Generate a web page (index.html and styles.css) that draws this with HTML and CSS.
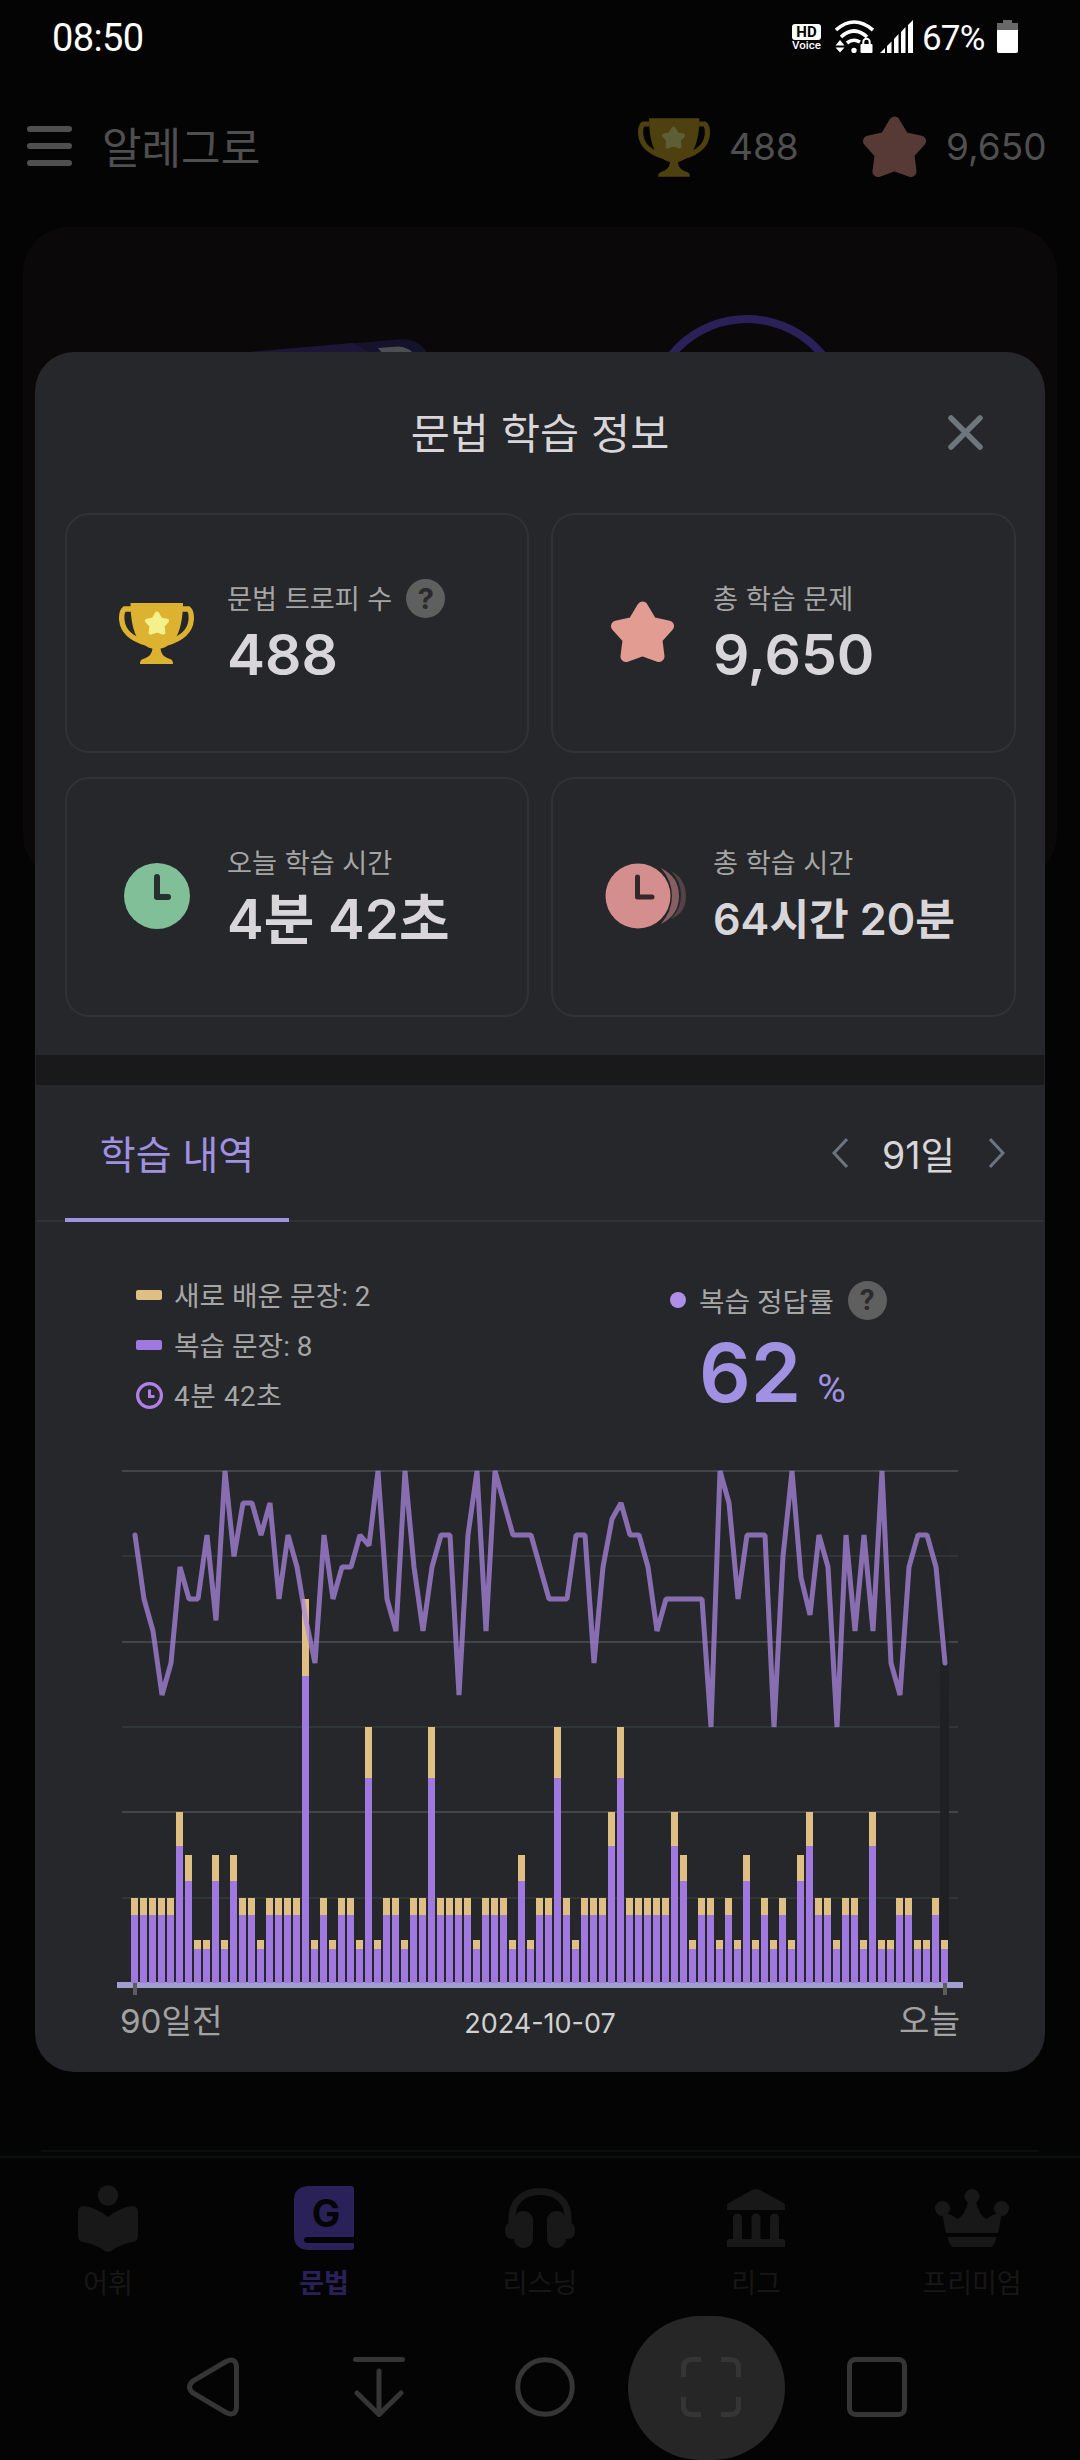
FILE: index.html
```html
<!DOCTYPE html>
<html lang="ko">
<head>
  <meta charset="UTF-8">
  <title>문법 학습 정보</title>
  <link rel="stylesheet" href="styles.css">
</head>
<body>

<!-- shared icons -->
<svg class="defs" width="0" height="0">
  <symbol id="star" viewBox="0 0 63 61">
    <path d="M31.5 6L40.6 21.3L57.5 25L45.8 38L48 55.5L31.5 49.5L15 55.5L17.2 38L5.5 25L22.4 21.3Z" fill="currentColor" stroke="currentColor" stroke-width="11" stroke-linejoin="round"/>
  </symbol>
  <symbol id="trophy" viewBox="0 0 75 61">
    <path d="M11.5 0H64C64 15 61 29 56 36C50 42 46 46 37.5 46C29 46 25 42 19 36C14 29 11.5 15 11.5 0Z" fill="currentColor"/>
    <path d="M12 6H5.5C3 8 2.5 13 2.8 17C4 30 14 36 27 40M63 6H69.5C72 8 72.5 13 72.2 17C71 30 61 36 48 40" fill="none" stroke="currentColor" stroke-width="5.4"/>
    <path d="M33.5 44C33.5 51 30 54 24 56C21.500 57 21 58.500 21 61H54C54 58.500 53.500 57 51 56C45 54 41.500 51 41.500 44Z" fill="currentColor"/>
  </symbol>
</svg>

<div class="screen">
  <div class="status-bar">
    <span class="clock">08:50</span>
    <div class="status-icons">
      <div class="hd"><b>HD</b><span>Voice</span></div>
      <svg class="wifi" width="39" height="33" viewBox="0 0 39 33">
        <g fill="none" stroke="#fff" stroke-width="3.6">
          <path d="M1 10Q19 -6 38 10"/>
          <path d="M6 17Q19 5 32 17"/>
          <path d="M12 23Q18 18 25 22"/>
        </g>
        <circle cx="19" cy="30.500" r="2.700" fill="#fff"/>
        <path d="M0.500 25.500L5 20L9.500 25.500ZM0.500 27.500L5 32.500L9.500 27.500Z" fill="#fff"/>
        <rect x="25.500" y="24" width="12" height="9" rx="1" fill="#fff"/>
        <path d="M28.300 25V22a3.200 3.200 0 0 1 6.400 0V25" fill="none" stroke="#fff" stroke-width="2"/>
      </svg>
      <svg class="signal" width="33" height="33" viewBox="0 0 33 33" fill="#fff">
        <path d="M0 33L5 28V33ZM7 26L11.500 21.500V33H7ZM14 19L18.500 14V33H14ZM21 12L25.500 7V33H21ZM28 5L33 0V33H28Z"/>
      </svg>
      <span class="percent">67%</span>
      <svg width="21" height="33" viewBox="0 0 21 33">
        <path d="M6 0H15V3H21V10H0V3H6Z" fill="#686868"/>
        <path d="M0 10H21V31Q21 33 19 33H2Q0 33 0 31Z" fill="#fff"/>
      </svg>
    </div>
  </div>

  <div class="app-header">
    <div class="menu"><i></i><i></i><i></i></div>
    <span class="user">알레그로</span>
    <div class="score score-trophy">
      <div class="trophy dim"><svg width="72" height="59"><use href="#trophy"/></svg><svg class="trophy-star" width="23" height="23"><use href="#star"/></svg></div>
      <span>488</span>
    </div>
    <div class="score score-star">
      <svg class="dim-star" width="63" height="61"><use href="#star"/></svg>
      <span>9,650</span>
    </div>
  </div>

  <div class="hero">
    <svg width="1034" height="130" viewBox="23 227 1034 130">
      <path d="M238 353L392 340Q418 336 427 353Z" fill="#15122b"/>
      <path d="M238 353L353 343L371 353Z" fill="#1e1636"/>
      <path d="M378 348L398 346.500Q408 347 413 353H382Z" fill="#4e4e52"/>
      <circle cx="747" cy="416" r="97" fill="none" stroke="#2b2159" stroke-width="8"/>
    </svg>
  </div>

  <div class="bottom">
    <div class="content-line"></div>
    <div class="tab-bar">
      <div class="tab">
        <svg width="60" height="67" viewBox="0 0 60 67" fill="#181818">
          <circle cx="30" cy="10.500" r="10.200"/>
          <path d="M30 32Q17 22 6 21Q0 21 0 27V51Q0 56 5 57Q17 59 26 65.500Q30 68 34 65.500Q43 59 55 57Q60 56 60 51V27Q60 21 54 21Q43 22 30 32Z"/>
        </svg>
        <span>어휘</span>
      </div>
      <div class="tab active">
        <svg width="60" height="64" viewBox="0 0 60 64">
          <path d="M14 0H57Q60 0 60 3V51H14Q10 51 10 54T14 57H60V61Q60 64 57 64H14Q0 63 0 50V14Q0 1 14 0Z" fill="#2b2159"/>
          <text class="book-letter" x="32" y="41" text-anchor="middle">G</text>
        </svg>
        <span>문법</span>
      </div>
      <div class="tab">
        <svg width="70" height="60" viewBox="0 0 70 60" fill="#181818">
          <path d="M7 36V30C7 14 18 3.500 35 3.500S63 14 63 30V36" fill="none" stroke="#181818" stroke-width="7"/>
          <rect x="9" y="23" width="19" height="37" rx="9"/>
          <rect x="42" y="23" width="19" height="37" rx="9"/>
          <rect x="0" y="34" width="14" height="17" rx="7"/>
          <rect x="56" y="34" width="14" height="17" rx="7"/>
        </svg>
        <span>리스닝</span>
      </div>
      <div class="tab">
        <svg width="58" height="58" viewBox="0 0 58 58" fill="#181818">
          <path d="M0 20V15L24 1.500Q29 -1 34 1.500L58 15V20Q58 21 57 21H1Q0 21 0 20Z"/>
          <path d="M6 51V29a4.500 4.500 0 0 1 9 0V50H24.500V29a4.500 4.500 0 0 1 9 0V50H43V29a4.500 4.500 0 0 1 9 0V50H56Q58 50 58 52V58H0V52Q0 50 2 50H6Z"/>
        </svg>
        <span>리그</span>
      </div>
      <div class="tab">
        <svg width="74" height="58" viewBox="0 0 74 58" fill="#181818">
          <circle cx="7.500" cy="19.500" r="7.500"/><circle cx="37" cy="7.500" r="7.500"/><circle cx="66.500" cy="19.500" r="7.500"/>
          <path d="M7 24Q15 24 23 30Q30 26 33 13H41Q44 26 51 30Q59 24 67 24L63 44H11ZM12.500 48H61.500Q60 56 56 58H18Q14 56 12.500 48Z"/>
        </svg>
        <span>프리미엄</span>
      </div>
    </div>
    <div class="system-bar">
      <svg width="52" height="60" viewBox="0 0 52 60"><path d="M6 24L39 4.500Q49 0 49.500 10V50Q49 60 39 55.500L6 36Q-1 30 6 24Z"/></svg>
      <svg class="round" width="52" height="60" viewBox="0 0 52 60"><path d="M2.500 2.500H49.500M26 14V57M4 36L26 57.500L48 36"/></svg>
      <svg width="60" height="60" viewBox="0 0 60 60"><circle cx="30" cy="30" r="27.300"/></svg>
      <div class="capture">
        <svg width="60" height="60" viewBox="0 0 60 60"><path d="M2.500 20V11Q2.500 2.500 11 2.500H20M40 2.500H49Q57.500 2.500 57.500 11V20M57.500 40V49Q57.500 57.500 49 57.500H40M20 57.500H11Q2.500 57.500 2.500 49V40"/></svg>
      </div>
      <svg width="60" height="60" viewBox="0 0 60 60"><rect x="2.500" y="2.500" width="55" height="55" rx="6"/></svg>
    </div>
  </div>

  <div class="modal">
    <div class="modal-header">
      <h1>문법 학습 정보</h1>
      <svg width="35" height="35" viewBox="0 0 35 35"><path d="M3 3L32 32M32 3L3 32" stroke="#6e757b" stroke-width="5.500" stroke-linecap="round"/></svg>
    </div>

    <div class="stats">
      <div class="stat">
        <div class="trophy"><svg width="75" height="61"><use href="#trophy"/></svg><svg class="trophy-star" width="24" height="24"><use href="#star"/></svg></div>
        <div class="stat-text">
          <p><span>문법 트로피 수</span><i class="help">?</i></p>
          <strong>488</strong>
        </div>
      </div>
      <div class="stat">
        <div class="stat-icon pink-star"><svg width="63" height="61"><use href="#star"/></svg></div>
        <div class="stat-text">
          <p><span>총 학습 문제</span></p>
          <strong>9,650</strong>
        </div>
      </div>
      <div class="stat">
        <div class="stat-icon">
          <svg width="66" height="66" viewBox="0 0 66 66"><circle cx="33" cy="33" r="33" fill="#80bf97"/><path d="M33 14V34H44" fill="none" stroke="#26302e" stroke-width="6" stroke-linecap="round" stroke-linejoin="round"/></svg>
        </div>
        <div class="stat-text">
          <p><span>오늘 학습 시간</span></p>
          <strong class="time">4분 42초</strong>
        </div>
      </div>
      <div class="stat">
        <div class="stat-icon clocks">
          <svg width="82" height="66" viewBox="0 0 82 66">
            <path d="M66 8Q81 16 81 33T66 56Q76 46 76 32T66 8Z" fill="#534346"/>
            <path d="M56 5Q74 14 74 33T56 61Q67 48 67 33T56 5Z" fill="#875e62"/>
            <circle cx="33" cy="33" r="32.500" fill="#d58e8e"/>
            <path d="M32.500 14V34H47" fill="none" stroke="#33292b" stroke-width="5" stroke-linecap="round" stroke-linejoin="round"/>
          </svg>
        </div>
        <div class="stat-text">
          <p><span>총 학습 시간</span></p>
          <strong class="total">64시간 20분</strong>
        </div>
      </div>
    </div>

    <div class="band"></div>

    <div class="history-head">
      <div class="history-tab">학습 내역</div>
      <div class="range">
        <svg width="16" height="30" viewBox="0 0 16 30"><path d="M15 1L2 15L15 29"/></svg>
        <span>91일</span>
        <svg width="16" height="30" viewBox="0 0 16 30"><path d="M1 1L14 15L1 29"/></svg>
      </div>
    </div>

    <div class="summary">
      <ul class="legend">
        <li><i class="swatch new"></i><span>새로 배운 문장: 2</span></li>
        <li><i class="swatch review"></i><span>복습 문장: 8</span></li>
        <li><svg width="27" height="27" viewBox="0 0 27 27"><circle cx="13.500" cy="13.500" r="11.900" fill="none" stroke="#b080e6" stroke-width="3.200"/><path d="M13.500 7.500V14.500H18.500" fill="none" stroke="#b080e6" stroke-width="3"/></svg><span class="spent">4분 42초</span></li>
      </ul>
      <div class="accuracy">
        <p><i class="dot"></i><span>복습 정답률</span><i class="help">?</i></p>
        <div class="rate"><strong>62</strong><span>%</span></div>
      </div>
    </div>

    <svg id="chart" class="chart" width="846" height="534" viewBox="117 1461 846 534">
      <defs>
        <linearGradient id="todayFade" x1="0" y1="0" x2="0" y2="1">
          <stop offset="0" stop-color="#1e2023" stop-opacity="0"/>
          <stop offset="0.4" stop-color="#1e2023"/>
        </linearGradient>
      </defs>
    </svg>
    <div class="axis">
      <span>90일전</span>
      <span class="date">2024-10-07</span>
      <span>오늘</span>
    </div>
  </div>
</div>

<script>
  const TOP = 1471;
  const BASE = 1983;
  const UNIT = (BASE - TOP) / 60;

  // sentences per day, 90 days ago -> today (a fifth of them are new)
  const totals = [
    10, 10, 10, 10, 10, 20, 15, 5, 5, 15, 5, 15, 10, 10, 5, 10, 10, 10, 10, 45,
    5, 10, 5, 10, 10, 5, 30, 5, 10, 10, 5, 10, 10, 30, 10, 10, 10, 10, 5, 10,
    10, 10, 5, 15, 5, 10, 10, 30, 10, 5, 10, 10, 10, 20, 30, 10, 10, 10, 10, 10,
    20, 15, 5, 10, 10, 5, 10, 5, 15, 5, 10, 5, 10, 5, 15, 20, 10, 10, 5, 10,
    10, 5, 20, 5, 5, 10, 10, 5, 5, 10, 5
  ];

  // review misses out of 16
  const misses = [
    2, 4, 5, 7, 6, 3, 4, 4, 2, 4.67, 0, 2.67, 1, 1, 2, 1, 4, 2, 3, 4.67,
    6, 2, 4, 3, 3, 2, 2.33, 0, 4, 5, 0, 3, 5, 3, 2, 2, 7, 2, 0, 5,
    0, 1, 2, 2, 2, 3, 4, 4, 4, 2, 2, 6, 3, 1.5, 1, 2, 2, 3, 5, 4,
    4, 4, 4, 4, 8, 0, 1, 4, 2, 2, 2, 8, 2.67, 0, 3.33, 4.5, 2, 3, 8, 2,
    5, 2, 5, 0, 6, 7, 3, 2, 2, 3, 6
  ];

  const chart = document.getElementById("chart");

  function add(tag, attrs) {
    const el = document.createElementNS("http://www.w3.org/2000/svg", tag);
    for (const key in attrs) el.setAttribute(key, attrs[key]);
    chart.appendChild(el);
  }

  for (let i = 0; i < 6; i++) {
    const y = Math.round(TOP + i * (BASE - TOP) / 6) - 1;
    add("rect", { x: 122, y: y, width: 836, height: 2, fill: i % 2 ? "#303638" : "#434547" });
  }
  add("rect", { x: 940, y: 1530, width: 9, height: BASE - 1530, fill: "url(#todayFade)" });
  add("rect", { x: 117, y: 1982, width: 846, height: 6, fill: "#a09fd0" });

  totals.forEach((total, i) => {
    const x = 131 + i * 9;
    const top = Math.round(BASE - total * UNIT);
    const split = Math.round(BASE - total * 0.8 * UNIT);
    add("rect", { x: x, y: top, width: 7, height: split - top, fill: "#dfbf83" });
    add("rect", { x: x, y: split, width: 7, height: BASE - split, fill: "#a079df" });
  });

  add("rect", { x: 133, y: 1983, width: 4, height: 12, fill: "#5c5c5c" });
  add("rect", { x: 943, y: 1983, width: 4, height: 12, fill: "#5c5c5c" });

  const points = misses.map((m, i) => `${135 + i * 9},${TOP + m * 32}`).join(" ");
  add("polyline", { points: points, class: "rate-line" });
</script>

</body>
</html>
```
FILE: styles.css
```css
* {
  box-sizing: border-box;
}

body {
  margin: 0;
  background: #040404;
  font-family: Inter, "Noto Sans CJK KR", sans-serif;
}

h1, p, ul {
  margin: 0;
  padding: 0;
  font-weight: 400;
}

i {
  font-style: normal;
}

svg {
  display: block;
  flex: none;
}

.defs {
  position: absolute;
}

.screen {
  position: relative;
  display: flex;
  flex-direction: column;
  width: 1080px;
  height: 2460px;
  overflow: hidden;
}

/* status bar */
.status-bar {
  display: flex;
  justify-content: space-between;
  height: 75px;
  padding: 0 62px 0 52px;
  color: #fff;
  font-family: Roboto, sans-serif;
  line-height: 77px;
}

.clock {
  font-size: 38px;
  letter-spacing: -0.6px;
}

.status-icons {
  display: flex;
  align-items: center;
  height: 73px;
}

.hd {
  width: 29px;
  margin-right: 14px;
  text-align: center;
  padding-top: 2px;
}

.hd b {
  display: block;
  height: 16px;
  border-radius: 3px;
  background: #fff;
  color: #000;
  font-size: 15px;
  line-height: 16px;
}

.hd span {
  display: block;
  font-size: 11.5px;
  font-weight: 500;
  line-height: 11px;
}

.signal {
  margin-left: 6px;
}

.percent {
  width: 74px;
  margin-left: 9px;
  margin-right: 1px;
  padding-top: 3px;
  font-size: 35px;
  letter-spacing: -0.8px;
}

/* header */
.app-header {
  display: flex;
  align-items: center;
  height: 142px;
  padding: 0 34px 0 27px;
  color: #4f4f4f;
}

.menu {
  display: flex;
  flex-direction: column;
  gap: 11px;
  width: 45px;
}

.menu i {
  height: 6px;
  border-radius: 3px;
  background: #4f4f4f;
}

.user {
  flex: 1;
  padding: 0 0 2px 30px;
  font-size: 43px;
}

.score {
  display: flex;
  align-items: center;
  font-size: 37px;
}

.score-trophy {
  gap: 18px;
  width: 225px;
}

.score-star {
  gap: 20px;
  width: 183px;
}

.dim-star {
  color: #573a36;
}

.trophy {
  position: relative;
  width: 75px;
  margin-right: 1px;
  color: #dcb230;
}

.trophy-star {
  position: absolute;
  left: 26px;
  top: 8px;
  color: #f4f18c;
}

.trophy.dim {
  width: 72px;
  color: #4f400f;
  padding-top: 3px;
}

.dim .trophy-star {
  left: 24px;
  top: 11px;
  color: #5d5e36;
}

.hero {
  height: 653px;
  margin: 10px 23px 0;
  border-radius: 45px;
  background: #0a0809;
}

/* bottom bars */
.bottom {
  margin-top: auto;
}

.content-line {
  height: 2px;
  margin: 0 41px 4px;
  background: #0b0e0e;
}

.tab-bar {
  display: flex;
  height: 158px;
  border-top: 2px solid #0b0e0e;
}

.tab {
  display: flex;
  flex-direction: column;
  align-items: center;
  width: 216px;
  padding-top: 25px;
  color: #171717;
  font-size: 27px;
}

.tab svg {
  margin: auto 0;
}

.tab span {
  height: 61px;
  padding-top: 10px;
  line-height: 42px;
}

.tab.active {
  color: #2b2159;
  font-weight: 700;
}

.book-letter {
  fill: #050505;
  font-size: 38px;
  font-weight: 700;
}

.system-bar {
  display: flex;
  align-items: center;
  height: 146px;
  padding-left: 187px;
  fill: none;
  stroke: #353535;
  stroke-width: 5;
}

.system-bar > svg {
  margin-right: 110px;
}

.system-bar > svg:first-child {
  margin-right: 114px;
}

.system-bar > svg:nth-child(3) {
  margin-right: 53px;
}

.round {
  stroke-linecap: round;
  stroke-linejoin: round;
}

.capture {
  display: flex;
  align-items: center;
  width: 157px;
  height: 144px;
  margin: 2px 62px 0 0;
  padding: 0 0 2px 53px;
  border-radius: 74px;
  background: #262626;
}

/* modal */
.modal {
  position: absolute;
  left: 35px;
  top: 352px;
  width: 1010px;
  height: 1720px;
  border-radius: 39px;
  background: #25272a;
  color: #d8d6d8;
}

.modal-header {
  display: flex;
  align-items: center;
  height: 161px;
  padding: 0 62px;
}

.modal-header h1 {
  flex: 1;
  margin-left: 35px;
  padding-bottom: 5px;
  font-size: 42.5px;
  text-align: center;
}

.stats {
  display: grid;
  grid-template-columns: 464px 465px;
  grid-auto-rows: 240px;
  gap: 24px 22px;
  margin-left: 30px;
}

.stat {
  display: flex;
  align-items: center;
  gap: 33px;
  padding-left: 52px;
  border: 2px solid #303335;
  border-radius: 24px;
}

.stat .trophy {
  margin-right: 0;
}

.stat-icon {
  display: flex;
  justify-content: center;
  width: 75px;
  padding-bottom: 2px;
}

.pink-star {
  padding-bottom: 3px;
}

.pink-star {
  color: #e39c91;
}

.clocks {
  justify-content: flex-start;
}

.stat-text p {
  display: flex;
  align-items: center;
  height: 38px;
  color: #a5a5a5;
  font-size: 27.2px;
}

.stat-text p span {
  padding-bottom: 3px;
}

.stat-text strong {
  display: block;
  margin-top: 5px;
  font-size: 57px;
  font-weight: 600;
  line-height: 64px;
}

.stat-text .time {
  font-size: 55px;
}

.stat-text .total {
  font-size: 43.2px;
}

.help {
  width: 39px;
  height: 39px;
  margin-left: 14px;
  border-radius: 50%;
  background: #5f5f5f;
  color: #2a2b2c;
  font-size: 29px;
  font-weight: 700;
  line-height: 39px;
  text-align: center;
}

.band {
  height: 30px;
  margin: 38px 1px 0;
  background: #19191b;
}

.history-head {
  display: flex;
  justify-content: space-between;
  height: 137px;
  margin: 0 1px;
  padding: 0 39px 0 29px;
  border-bottom: 2px solid #303235;
}

.history-tab {
  width: 224px;
  height: 137px;
  border-bottom: 4px solid #a091e3;
  color: #a091e3;
  font-size: 39px;
  line-height: 140px;
  text-align: center;
}

.range {
  display: flex;
  align-items: center;
  gap: 34px;
  font-size: 37.5px;
}

.range svg {
  fill: none;
  stroke: #6b7580;
  stroke-width: 3;
}

.summary {
  display: flex;
  height: 198px;
  padding: 48px 0 0 101px;
  font-family: Roboto, "Noto Sans CJK KR", sans-serif;
  font-size: 27.8px;
  color: #a6a6a6;
}

.legend {
  width: 534px;
  list-style: none;
}

.legend li {
  display: flex;
  align-items: center;
  gap: 11px;
  height: 50px;
}

.legend span {
  padding-bottom: 2px;
}

.legend .spent {
  letter-spacing: 0.6px;
}

.swatch {
  width: 26px;
  height: 10px;
  margin-right: 1px;
  border-radius: 2px;
}

.new {
  background: #dfbf83;
}

.review {
  background: #a079df;
}

.accuracy p {
  display: flex;
  align-items: center;
  height: 60px;
}

.accuracy p span {
  padding-bottom: 1px;
}

.dot {
  width: 16px;
  height: 16px;
  margin-right: 13px;
  border-radius: 50%;
  background: #ae8ee8;
}

.rate {
  display: flex;
  align-items: baseline;
  padding-left: 29px;
  color: #a091e3;
  line-height: 86px;
}

.rate strong {
  font-family: Inter, sans-serif;
  font-size: 81px;
  font-weight: 600;
}

.rate span {
  margin-left: 16px;
  font-size: 39px;
}

.chart {
  margin: 41px 0 0 82px;
}

.rate-line {
  fill: none;
  stroke: #ab85df;
  stroke-width: 5;
  stroke-opacity: 0.75;
  stroke-linecap: round;
  stroke-linejoin: bevel;
}

.axis {
  display: grid;
  grid-template-columns: 1fr auto 1fr;
  margin: 0 85px 0 85px;
  color: #a2a2a2;
  font-size: 33.2px;
  line-height: 52px;
}

.axis .date {
  padding-top: 3px;
  color: #d0d0d0;
  font-size: 27px;
}

.axis span:last-child {
  text-align: right;
}
```
